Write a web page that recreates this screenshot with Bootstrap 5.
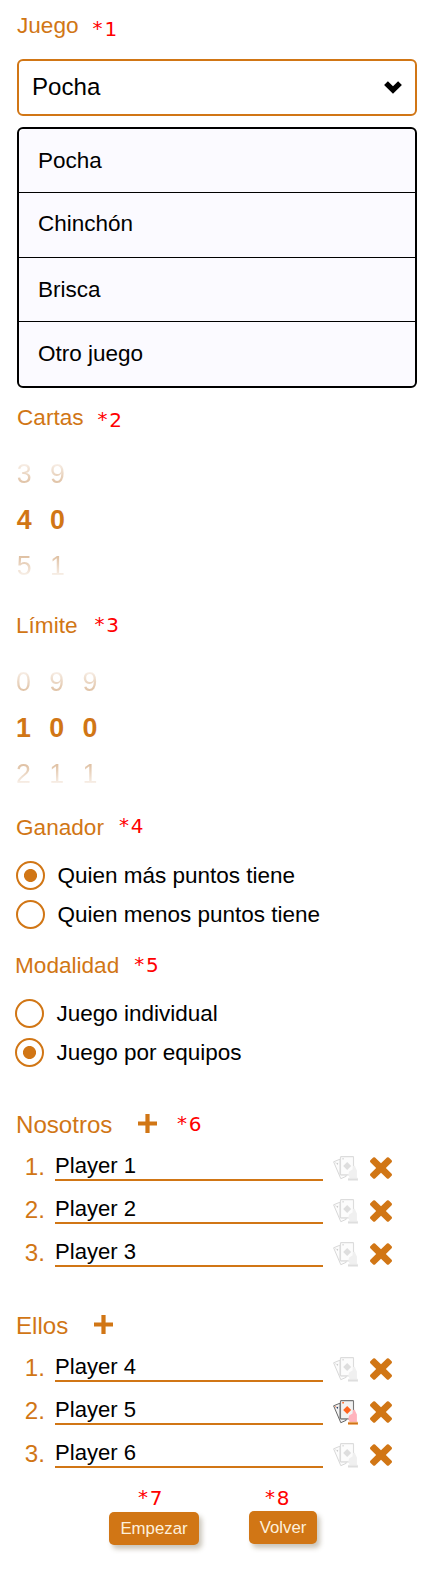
<!DOCTYPE html>
<html lang="es">
<head>
<meta charset="utf-8">
<meta name="viewport" content="width=device-width, initial-scale=1">
<title>Nueva partida</title>
<link href="https://cdn.jsdelivr.net/npm/bootstrap@5.3.0/dist/css/bootstrap.min.css" rel="stylesheet">
<style>
:root { --accent: #d17615; }
body { font-family: "Liberation Sans", Arial, sans-serif; color: #000; background: #fff; font-size: 22.5px; }
.page { width: 426px; height: 1573px; padding: 10px 9px 0 16px; overflow: hidden; }
.section-title { font-size: 22.6px; line-height: 30px; height: 30px; color: var(--accent); font-weight: 400; margin: 0; white-space: nowrap; }
.team-title { font-size: 24.1px; }
.note { font: 20px/30px "DejaVu Sans", Verdana, sans-serif; color: #f00; }
.note .star { line-height: 1; vertical-align: 1px; letter-spacing: 1.8px; }
.game-select { height: 57px; margin: 19px 0 0 1px; padding: 0 13px 0 13px; border: 2px solid var(--accent); border-radius: 6px; font-size: 24.1px; background: #fff; width: 400px; }
.game-select span { padding-bottom: 1px; }
.game-list { margin: 11px 0 0 1px; width: 400px; height: 261px; border: 2px solid #000; border-radius: 6px; }
.game-list .list-group-item { background: #fbfaff; color: #000; border: 0; border-bottom: 1px solid #000; padding: 0 19px; height: 64px; }
.game-list .list-group-item:nth-child(2) { height: 65px; padding-bottom: 2px; }
.game-list .list-group-item:last-child { border-bottom: 0; padding-bottom: 1px; }
.wheel { margin-top: 18px; height: 138px; font-size: 26.8px; line-height: 46px; color: var(--accent); gap: 18.3px; }
.wheel-col { width: 15px; }
.wheel-col span { display: block; }
.wheel-col .prev, .wheel-col .next { color: transparent; -webkit-background-clip: text; background-clip: text; }
.wheel-col .prev { background-image: linear-gradient(to bottom, #fff 8px, #f3e6da 16px, #dcbb9b 35px); }
.wheel-col .next { background-image: linear-gradient(to bottom, #dcbb9b 11px, #f3e6da 29px, #fff 36px); }
.choices { margin-top: 18px; gap: 10px; }
.choice { height: 29px; gap: 12.4px; line-height: 29px; white-space: nowrap; }
.choice .form-check-input { width: 29px; height: 29px; margin: 0; border: 2px solid var(--accent); background: #fff; }
.choice .form-check-input:checked { background: radial-gradient(circle, var(--accent) 6.1px, #fff 6.9px); border-color: var(--accent); }
.players { margin-top: 8px; gap: 10px; }
.player { height: 33px; }
.player .num { width: 29px; font-size: 24.2px; line-height: 33px; padding-top: 2px; color: var(--accent); text-align: right; }
.player .name { width: 268px; height: 33px; margin-left: 10px; padding: 4px 0 0; font-size: 22.1px; line-height: 28px; border: 0; border-bottom: 2px solid var(--accent); border-radius: 0; color: #000; background: #fff; outline: 0; }
.deal { width: 25px; height: 25px; margin: 8px 0 0 10px; filter: grayscale(1) opacity(.26); }
.deal.active { filter: none; }
.remove { width: 22px; height: 22px; margin: 9px 0 0 11.7px; fill: var(--accent); }
.action { height: 33px; padding: 0; font-size: 16.8px; line-height: 33px; border: 0; border-radius: 5px; color: #fdf0dc; background: var(--accent); box-shadow: 3px 4px 5px rgba(90,75,40,.32); }
</style>
</head>
<body>
<svg class="d-none" xmlns="http://www.w3.org/2000/svg">
  <symbol id="plus" viewBox="0 0 19 19"><path d="M7.4 0h4.2v7.4H19v4.2h-7.4V19H7.4v-7.4H0V7.4h7.4z" fill="#d17615"/></symbol>
  <symbol id="cross" viewBox="302 366 1188 1188"><path d="M1490 1322q0 30-20 50l-152 152q-20 20-50 20t-50-20l-322-302-322 302q-20 20-50 20t-50-20l-152-152q-20-20-20-50t20-50l312-312-312-312q-20-20-20-50t20-50l152-152q20-20 50-20t50 20l322 302 322-302q20-20 50-20t50 20l152 152q20 20 20 50t-20 50l-312 312 312 312q20 20 20 50z"/></symbol>
  <symbol id="cards" viewBox="0 0 25 25">
    <path d="M.6 5.8 7 3.2v15.5h6.2v1.6l-5.4 2.4z" fill="#f4f4f4" stroke="#666" stroke-width="1"/>
    <path d="M3.2 7.2 5.3 6.8 4.6 9z" fill="#243b67"/>
    <path d="M2.2 6.2h1v1h-1z" fill="#ff641e"/>
    <rect x="7.5" y=".6" width="13" height="18.3" rx=".6" fill="#f2f2f2" stroke="#777" stroke-width="1.1"/>
    <path d="m14.2 6.1 4 4-4 4-4-4z" fill="#ff641e"/>
    <path d="M9.3 2h1.6v1.4H9.3z" fill="#ff641e"/>
    <path d="M20 10.2c1.4-.8 2.2-.2 2.4 1.2l1.5 3.2v7.8h-7l-1.6-3.6.8-3.2 3.5-2z" fill="#ffb3bd"/>
    <path d="M15 21.8h10V25H15z" fill="#f0b678"/><path d="M15 22.7h9.8v1.3H15z" fill="#cf7218"/>
  </symbol>
</svg>
<main class="page d-flex flex-column align-items-start">
  <div class="d-flex" style="height:30px">
    <h2 class="section-title" style="padding:1px 0 0 1px">Juego</h2><span class="note" style="margin:4px 0 0 14px"><span class="star">*</span>1</span>
  </div>
  <button type="button" class="game-select d-flex align-items-center justify-content-between">
    <span>Pocha</span>
    <svg width="18" height="13" viewBox="0 0 18 13"><path d="M9 12.8.1 4 3.9.3 9 5.3 14.1.3 17.9 4z"/></svg>
  </button>
  <ul class="game-list list-group">
    <li class="list-group-item d-flex align-items-center">Pocha</li>
    <li class="list-group-item d-flex align-items-center">Chinchón</li>
    <li class="list-group-item d-flex align-items-center">Brisca</li>
    <li class="list-group-item d-flex align-items-center">Otro juego</li>
  </ul>

  <div class="d-flex" style="height:30px;margin-top:15px">
    <h2 class="section-title" style="padding-left:1px">Cartas</h2><span class="note" style="margin:2px 0 0 14px"><span class="star">*</span>2</span>
  </div>
  <div class="wheel d-flex" style="padding-left:.8px">
    <div class="wheel-col"><span class="prev">3</span><span class="fw-bold">4</span><span class="next">5</span></div>
    <div class="wheel-col"><span class="prev">9</span><span class="fw-bold">0</span><span class="next">1</span></div>
  </div>

  <div class="d-flex" style="height:30px;margin-top:22px">
    <h2 class="section-title">Límite</h2><span class="note" style="margin-left:17px;margin-top:-1px"><span class="star">*</span>3</span>
  </div>
  <div class="wheel d-flex">
    <div class="wheel-col"><span class="prev">0</span><span class="fw-bold">1</span><span class="next">2</span></div>
    <div class="wheel-col"><span class="prev">9</span><span class="fw-bold">0</span><span class="next">1</span></div>
    <div class="wheel-col"><span class="prev">9</span><span class="fw-bold">0</span><span class="next">1</span></div>
  </div>

  <div class="d-flex" style="height:30px;margin-top:16px">
    <h2 class="section-title">Ganador</h2><span class="note" style="margin-left:15px;margin-top:-2px"><span class="star">*</span>4</span>
  </div>
  <div class="choices d-flex flex-column">
    <label class="choice d-flex"><input class="form-check-input" type="radio" name="ganador" checked><span>Quien más puntos tiene</span></label>
    <label class="choice d-flex"><input class="form-check-input" type="radio" name="ganador"><span>Quien menos puntos tiene</span></label>
  </div>

  <div class="d-flex" style="height:30px;margin-top:22px;margin-left:-1px">
    <h2 class="section-title">Modalidad</h2><span class="note" style="margin-left:15px;margin-top:-1px"><span class="star">*</span>5</span>
  </div>
  <div class="choices d-flex flex-column" style="margin-left:-1px">
    <label class="choice d-flex"><input class="form-check-input" type="radio" name="modo"><span>Juego individual</span></label>
    <label class="choice d-flex"><input class="form-check-input" type="radio" name="modo" checked><span>Juego por equipos</span></label>
  </div>

  <div class="d-flex" style="height:30px;margin-top:43px">
    <h2 class="section-title team-title">Nosotros</h2>
    <svg width="19" height="19" style="margin:4px 0 0 25.5px"><use href="#plus"/></svg>
    <span class="note" style="margin-left:20px;margin-top:-1px"><span class="star">*</span>6</span>
  </div>
  <div class="players d-flex flex-column">
    <div class="player d-flex"><span class="num">1.</span><input class="name" value="Player 1"><svg class="deal"><use href="#cards"/></svg><svg class="remove"><use href="#cross"/></svg></div>
    <div class="player d-flex"><span class="num">2.</span><input class="name" value="Player 2"><svg class="deal"><use href="#cards"/></svg><svg class="remove"><use href="#cross"/></svg></div>
    <div class="player d-flex"><span class="num">3.</span><input class="name" value="Player 3"><svg class="deal"><use href="#cards"/></svg><svg class="remove"><use href="#cross"/></svg></div>
  </div>

  <div class="d-flex" style="height:30px;margin-top:44px">
    <h2 class="section-title team-title">Ellos</h2>
    <svg width="19" height="19" style="margin:4px 0 0 25.5px"><use href="#plus"/></svg>
  </div>
  <div class="players d-flex flex-column">
    <div class="player d-flex"><span class="num">1.</span><input class="name" value="Player 4"><svg class="deal"><use href="#cards"/></svg><svg class="remove"><use href="#cross"/></svg></div>
    <div class="player d-flex"><span class="num">2.</span><input class="name" value="Player 5"><svg class="deal active"><use href="#cards"/></svg><svg class="remove"><use href="#cross"/></svg></div>
    <div class="player d-flex"><span class="num">3.</span><input class="name" value="Player 6"><svg class="deal"><use href="#cards"/></svg><svg class="remove"><use href="#cross"/></svg></div>
  </div>

  <div class="d-flex align-items-start" style="margin:15px 0 0 93px;gap:50px">
    <div class="d-flex flex-column" style="width:90px">
      <span class="note" style="height:29px;padding-left:29px"><span class="star">*</span>7</span>
      <button type="button" class="action">Empezar</button>
    </div>
    <div class="d-flex flex-column" style="width:68px">
      <span class="note" style="height:28px;padding-left:16px"><span class="star">*</span>8</span>
      <button type="button" class="action">Volver</button>
    </div>
  </div>
</main>
<script src="https://cdn.jsdelivr.net/npm/bootstrap@5.3.0/dist/js/bootstrap.bundle.min.js"></script>
</body>
</html>
